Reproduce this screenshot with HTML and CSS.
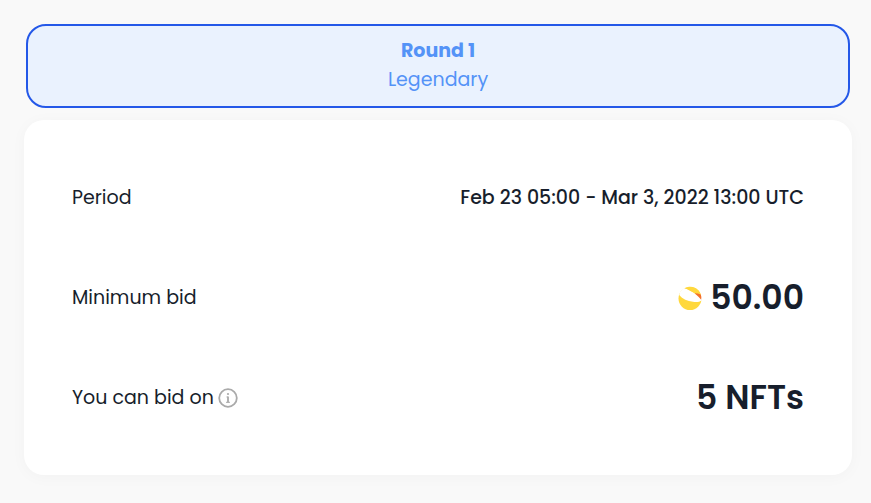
FILE: index.html
```html
<!DOCTYPE html>
<html lang="en">
<head>
    <meta charset="UTF-8">
    <meta name="viewport" content="width=device-width, initial-scale=1.0">
    <title>Auction Round</title>
    <link rel="stylesheet" href="styles.css">
</head>
<body>
    <button type="button" class="round-tab">
        <strong class="round-name">Round 1</strong>
        <span class="round-tier">Legendary</span>
    </button>

    <dl class="round-card">
        <div class="row">
            <dt>Period</dt>
            <dd class="period">Feb 23 05:00 - Mar 3, 2022 13:00 UTC</dd>
        </div>
        <div class="row">
            <dt>Minimum bid</dt>
            <dd class="amount">
                <svg class="coin" viewBox="0 0 24 24" aria-hidden="true">
                    <circle cx="12" cy="12.5" r="11.5" fill="#ffd83d"/>
                    <path d="M4 3.5C2.5 5 1.5 7 1.2 9C4.5 13 9.5 15.2 15 15.8C18.5 16.3 21.5 16 24 14.2V7.5L20 8C15.5 7.2 11 4 7 2Z" fill="#fff"/>
                    <path d="M6.5 2.4C11-.2 17 .4 20.5 4.5Q22.4 6.6 23 9.4C20.4 9.3 18.2 8.8 16.4 7.2C13.2 4.4 10 2.6 6.5 2.4Z" fill="#ffd83d"/>
                    <path d="M16.6 7.2Q20 7.2 22.8 8.6Q23.8 11.4 23.2 13.8Q20.8 10.8 16.6 7.2Z" fill="#f4702a"/>
                </svg>
                <span>50.00</span>
            </dd>
        </div>
        <div class="row">
            <dt>
                You can bid on
                <svg class="info" viewBox="0 0 20 20" fill="none" stroke="#aaa" stroke-width="1.8" aria-hidden="true">
                    <circle cx="10" cy="10" r="8.8"/>
                    <path d="M10 8.5V14.5"/>
                    <path d="M8.5 9H10M8 14.3H12" stroke-width="1"/>
                    <circle cx="10" cy="6" r="1.1" fill="#aaa" stroke="none"/>
                </svg>
            </dt>
            <dd class="amount">5 NFTs</dd>
        </div>
    </dl>
</body>
</html>
```
FILE: styles.css
```css
* {
    box-sizing: border-box;
}

body {
    margin: 0;
    padding: 24px 19px 28px 24px;
    background-color: #f9f9f9;
    color: #171e2c;
    font-family: Poppins, Inter, sans-serif;
    font-size: 19px;
    line-height: 29px;
}

.round-tab {
    display: flex;
    flex-direction: column;
    align-items: center;
    width: calc(100% - 4px);
    margin: 0 2px 12px;
    padding: 10px 11px 12px;
    border: 2px solid #2458e8;
    border-radius: 20px;
    background-color: #eaf2fe;
    color: #5493f7;
    font: inherit;
    cursor: pointer;
}

.round-name {
    font-weight: 700;
}

.round-card {
    display: flex;
    flex-direction: column;
    gap: 41px;
    margin: 0;
    padding: 48px;
    border-radius: 20px;
    background-color: #fff;
    box-shadow: 0 2px 16px rgba(0, 0, 0, 0.03);
}

.row {
    display: flex;
    align-items: center;
    justify-content: space-between;
    min-height: 59px;
}

dt,
dd {
    display: flex;
    align-items: center;
    gap: 4px;
    margin: 0;
}

.period {
    font-weight: 500;
}

.amount {
    gap: 8px;
    font-size: 33px;
    font-weight: 600;
}

.coin {
    width: 24px;
    height: 24px;
}

.info {
    width: 20px;
    height: 20px;
}
```
